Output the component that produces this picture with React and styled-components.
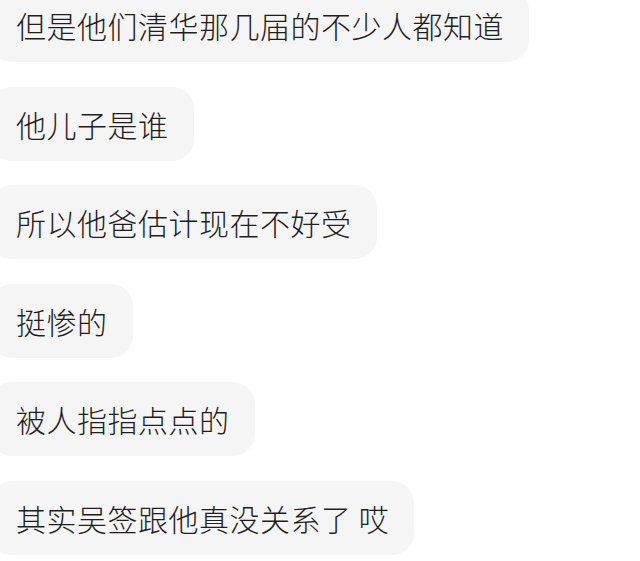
import styled, { createGlobalStyle } from "styled-components";

const GlobalStyle = createGlobalStyle`
    html, body {
        margin: 0;
        padding: 0;
        background: #ffffff;
        overflow: hidden;
    }
`;

const messages = [
    "但是他们清华那几届的不少人都知道",
    "他儿子是谁",
    "所以他爸估计现在不好受",
    "挺惨的",
    "被人指指点点的",
    "其实吴签跟他真没关系了 哎",
];

export default function App() {
    return (
        <>
            <GlobalStyle />
            <ChatList>
                {messages.map((text, i) => (
                    <Bubble key={i}>{text}</Bubble>
                ))}
            </ChatList>
        </>
    );
}

const ChatList = styled.div`
    width: 650px;
    height: 575px;
    overflow: hidden;

    display: flex;
    flex-direction: column;
    align-items: flex-start;
    gap: 24.6px;

    margin-top: -12px;
    margin-left: -10px;

    font-family: "Noto Sans CJK SC", "Noto Sans", sans-serif;
`;

const Bubble = styled.div`
    flex-shrink: 0;
    padding: 16px 25px 16px 26px;

    background-color: #f5f5f5;
    border-radius: 22px;

    color: #1e1e1e;
    font-size: 30px;
    font-weight: 300;
    letter-spacing: 0.5px;
    line-height: 42px;
    white-space: nowrap;
`;
